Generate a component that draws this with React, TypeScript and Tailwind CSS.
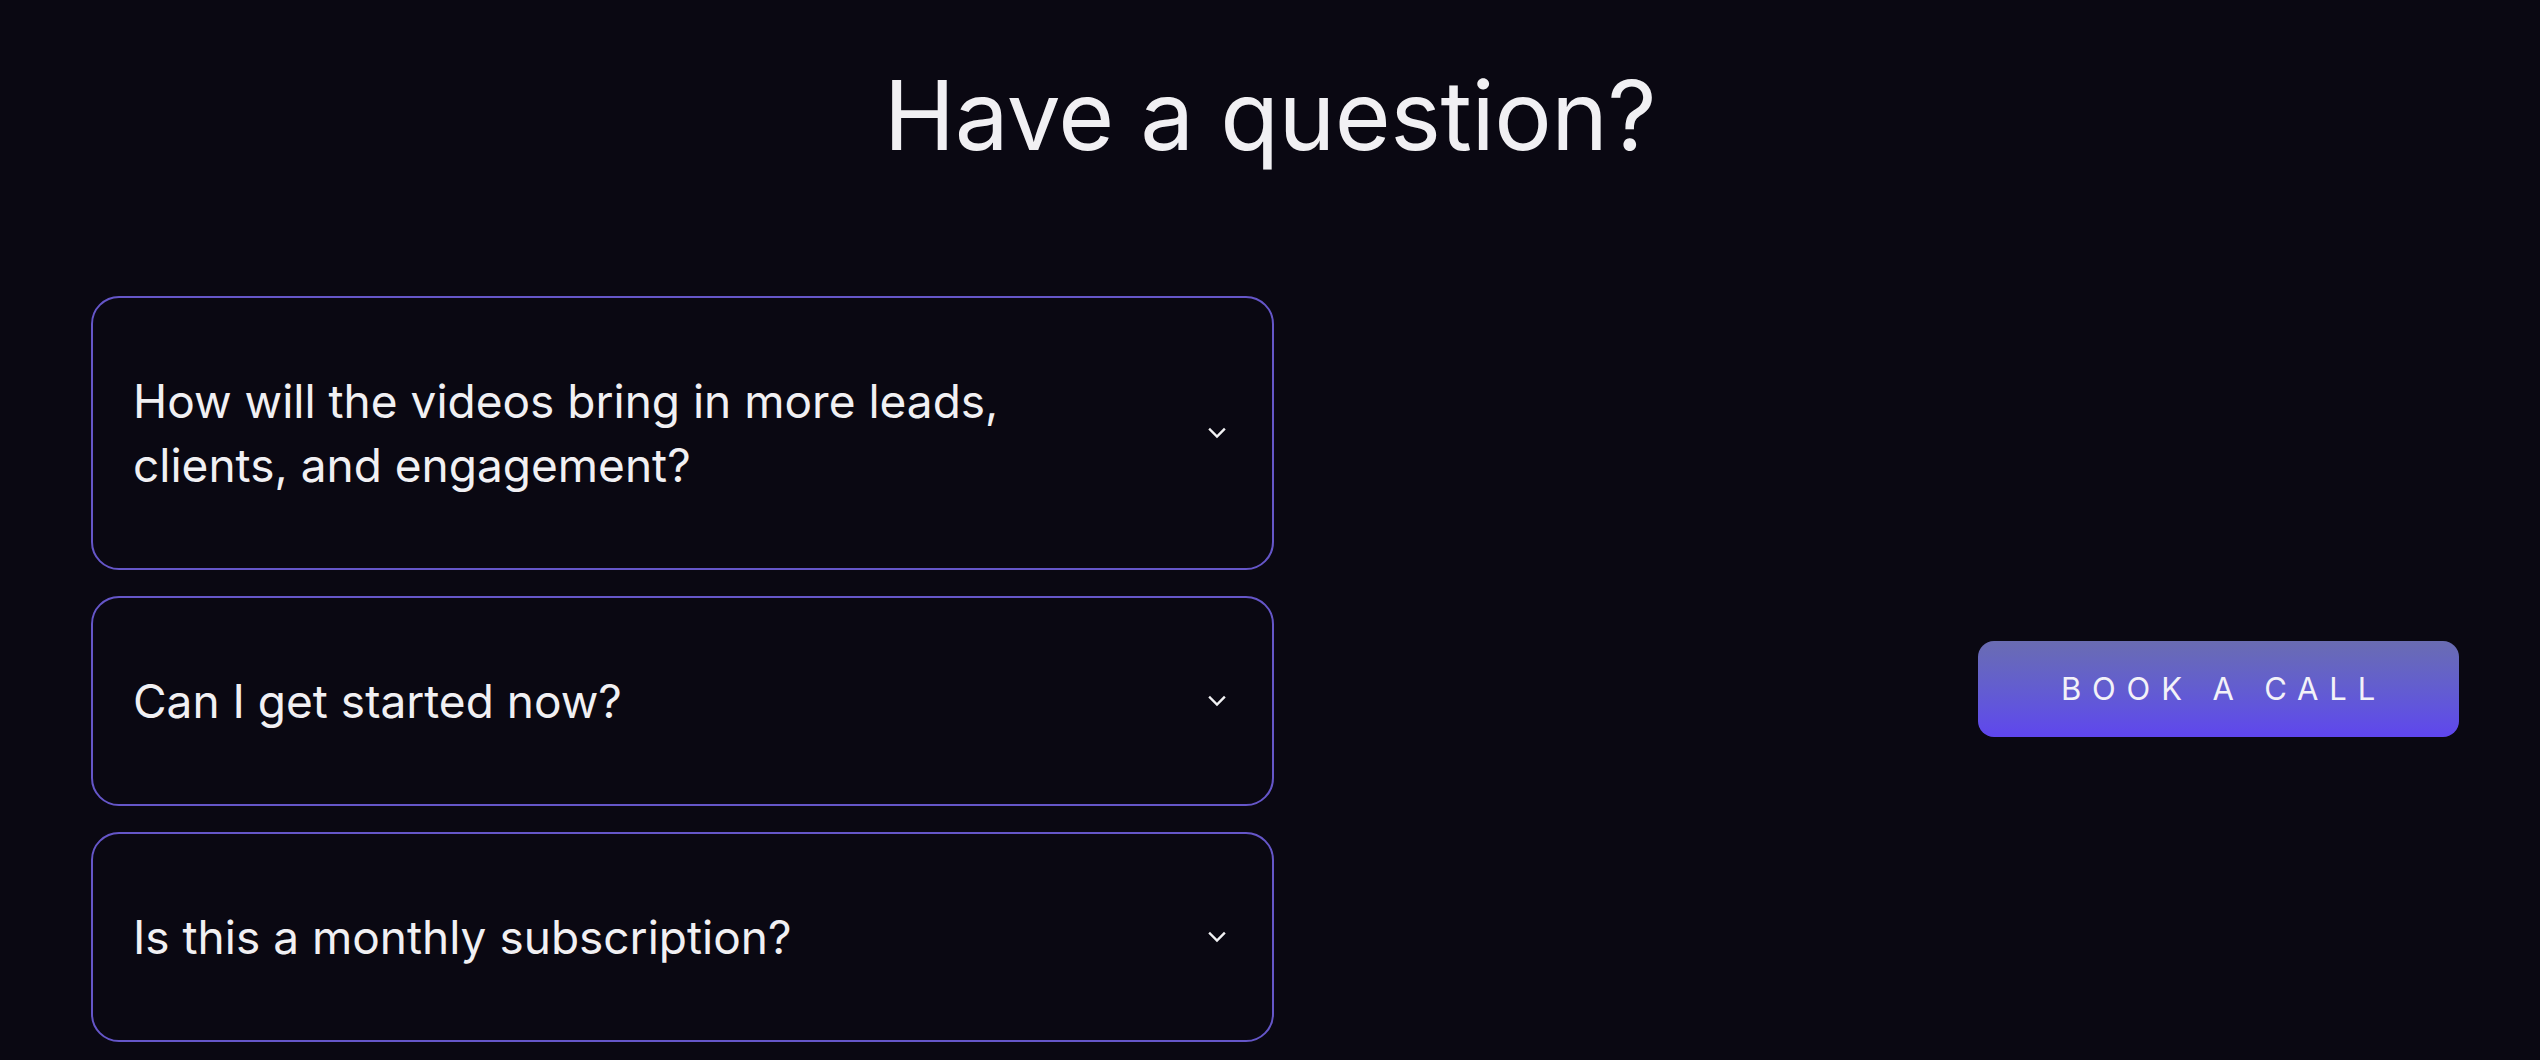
import React, { useState } from 'react';

const faqs = [
  { q: 'How will the videos bring in more leads, clients, and engagement?' },
  { q: 'Can I get started now?' },
  { q: 'Is this a monthly subscription?' },
];

const Chevron = ({ open }: { open: boolean }) => (
  <svg
    width="20"
    height="12"
    viewBox="0 0 20 12"
    fill="none"
    className={`shrink-0 transition-transform ${open ? 'rotate-180' : ''}`}
  >
    <path d="M3 2.5 10 9.5 17 2.5" stroke="#f2f2f4" strokeWidth="2.4" strokeLinecap="square" />
  </svg>
);

export default function App() {
  const [open, setOpen] = useState<number | null>(null);

  return (
    <div
      className="min-h-screen w-full bg-[#0a0812] text-[#f1f0f3]"
      style={{ fontFamily: 'Inter, "Noto Sans", sans-serif' }}
    >
      <h1 className="pt-[58px] text-center text-[96px] leading-[1.2] font-normal tracking-[-0.005em]">
        Have a question?
      </h1>

      <div className="mt-[123px] flex items-start justify-between pl-[91px] pr-[81px]">
        {/* FAQ list */}
        <div className="flex w-[1183px] flex-col gap-[26px]">
          {faqs.map((item, i) => (
            <button
              key={i}
              onClick={() => setOpen(open === i ? null : i)}
              className="flex w-full items-center justify-between rounded-[28px] border-2 border-[#6556c8] py-[71px] pl-[40px] pr-[45px] text-left"
            >
              <span className="max-w-[920px] text-[46px] leading-[64px]">{item.q}</span>
              <Chevron open={open === i} />
            </button>
          ))}
        </div>

        {/* CTA */}
        <div className="pt-[345px]">
          <button className="flex h-[96px] w-[481px] items-center justify-center rounded-[16px] bg-gradient-to-b from-[#6a6cb2] to-[#5f45ee] pl-[10px] text-[31px] tracking-[0.35em] text-[#f3f2f8]">
            BOOK A CALL
          </button>
        </div>
      </div>
    </div>
  );
}
